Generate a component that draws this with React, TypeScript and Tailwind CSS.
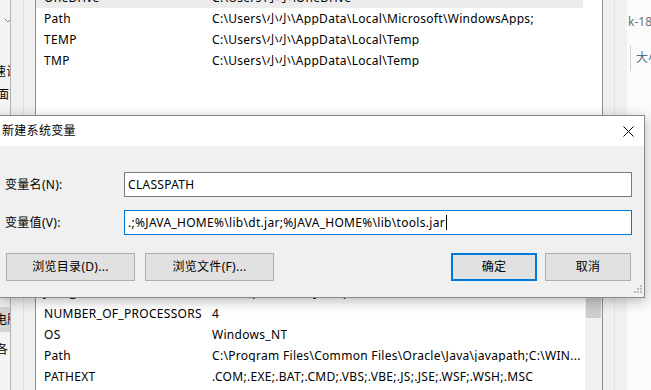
import React from "react";

const userVars = [
  { name: "OneDrive", value: "C:\\Users\\小小\\OneDrive", selected: true },
  { name: "Path", value: "C:\\Users\\小小\\AppData\\Local\\Microsoft\\WindowsApps;" },
  { name: "TEMP", value: "C:\\Users\\小小\\AppData\\Local\\Temp" },
  { name: "TMP", value: "C:\\Users\\小小\\AppData\\Local\\Temp" },
];

// rows above JAVA_HOME sit behind the dialog, so only a spacer is kept for them
const systemVars = [
  { name: "JAVA_HOME", value: "C:\\Program Files\\Java\\jdk-18.0.1" },
  { name: "NUMBER_OF_PROCESSORS", value: "4" },
  { name: "OS", value: "Windows_NT" },
  { name: "Path", value: "C:\\Program Files\\Common Files\\Oracle\\Java\\javapath;C:\\WIN..." },
  { name: "PATHEXT", value: ".COM;.EXE;.BAT;.CMD;.VBS;.VBE;.JS;.JSE;.WSF;.WSH;.MSC" },
  { name: "PROCESSOR_ARCHITECTURE", value: "AMD64" },
];

function VarRow({ name, value, selected }: { name: string; value: string; selected?: boolean }) {
  return (
    <div className={`flex h-[21px] w-[547px] items-center whitespace-nowrap ${selected ? "bg-[#ececec]" : ""}`}>
      <span className="w-[176px] pl-[8px] overflow-hidden">{name}</span>
      <span className="overflow-hidden">{value}</span>
    </div>
  );
}

function SizeGrip() {
  return (
    <svg width="10" height="10" viewBox="0 0 10 10" className="absolute right-[2px] bottom-[2px]">
      {[
        [8, 0],
        [5, 3],
        [8, 3],
        [2, 6],
        [5, 6],
        [8, 6],
      ].map(([x, y], i) => (
        <rect key={i} x={x} y={y} width="2" height="2" fill="#bcbcbc" />
      ))}
    </svg>
  );
}

export default function App() {
  return (
    <div className="relative flex h-[390px] w-[651px] overflow-hidden bg-[#f0f0f0] text-[12px] leading-none tracking-[0.3px] text-black font-['Noto_Sans','Noto_Sans_CJK_SC',sans-serif]">
      {/* Left background window fragment */}
      <div className="flex w-[11px] shrink-0 flex-col border-r border-[#b4b4b4] bg-[#f3f3f3] whitespace-nowrap overflow-hidden">
        <svg width="8" height="5" viewBox="0 0 8 5" className="mt-[18px] ml-[4px]">
          <path d="M0.5 0.5 L4 4 L7.5 0.5" stroke="#8a8a8a" fill="none" />
        </svg>
        <div className="mt-[43px] -ml-[6px]">速设</div>
        <div className="mt-[11px] -ml-[3px]">面</div>
        <div className="mt-[206px] -ml-[7px] flex h-[25px] items-center bg-[#d4d4d4] pl-[2px]">电脑</div>
        <div className="mt-[12px] -ml-[4px]">各</div>
      </div>

      {/* Environment variables window */}
      <div className="flex w-[616px] shrink-0 shadow-[2px_0_3px_rgba(0,0,0,0.25)]">
        <div className="w-[24px] shrink-0 pl-[12px]">
          <div className="h-full border-l border-[#e2e2e2]" />
        </div>
        <div className="flex w-[568px] shrink-0 flex-col">
          <div className="h-[160px] overflow-hidden border-x border-[#8d8d9a] bg-white">
            <div className="-mt-[13px]">
              {userVars.map((v) => (
                <VarRow key={v.name} {...v} />
              ))}
            </div>
          </div>
          <div className="mt-[10px] flex flex-1 overflow-hidden border-x border-[#8d8d9a] bg-white">
            <div className="flex-1 pt-[112px]">
              {systemVars.map((v) => (
                <VarRow key={v.name} {...v} />
              ))}
            </div>
            <div className="w-[17px] shrink-0 bg-[#f0f0f0] px-[1px]">
              <div className="mt-[127px] h-[21px] bg-[#cdcdcd]" />
            </div>
          </div>
        </div>
        <div className="w-[24px] shrink-0 pl-[11px]">
          <div className="h-full border-l border-[#e2e2e2]" />
        </div>
      </div>

      {/* Right background window fragment */}
      <div className="flex flex-1 flex-col overflow-hidden whitespace-nowrap bg-[#fbfbfb]">
        <div className="mt-[16px] ml-[1px] tracking-normal text-[#707070]">k-18</div>
        <div className="mt-[17px] ml-[3px] flex h-[26px] items-center border-l border-[#d0d0d0] pl-[5px] text-[#4e6d8c]">
          大小
        </div>
      </div>

      {/* New system variable dialog */}
      <div className="absolute left-[-1px] top-[115px] w-[646px] border border-[#8a8a8a] shadow-[0_3px_12px_rgba(0,0,0,0.28)]">
        <div className="flex h-[30px] items-center justify-between bg-white">
          <span className="pl-[2px]">新建系统变量</span>
          <svg width="11" height="11" viewBox="0 0 11 11" className="mr-[10px]">
            <path d="M0.5 0.5 L10.5 10.5 M10.5 0.5 L0.5 10.5" stroke="#000" strokeWidth="1" />
          </svg>
        </div>
        <div className="relative h-[151px] bg-[#f0f0f0]">
          <div className="flex items-center pt-[26px]">
            <span className="w-[124px] pl-[5px]">变量名(N):</span>
            <div className="flex h-[25px] w-[508px] items-center border border-[#7a7a7a] bg-white pl-[3px]">
              CLASSPATH
            </div>
          </div>
          <div className="mt-[13px] flex items-center">
            <span className="w-[124px] pl-[5px]">变量值(V):</span>
            <div className="flex h-[25px] w-[508px] items-center border border-[#0078d7] bg-white pl-[3px]">
              <span>.;%JAVA_HOME%\lib\dt.jar;%JAVA_HOME%\lib\tools.jar</span>
              <span className="ml-[1px] h-[15px] w-[1px] bg-black" />
            </div>
          </div>
          <div className="mt-[18px] flex pl-[6px] pr-[13px]">
            <button className="flex h-[28px] w-[129px] items-center justify-center border border-[#adadad] bg-[#e1e1e1]">
              浏览目录(D)...
            </button>
            <button className="ml-[10px] flex h-[28px] w-[129px] items-center justify-center border border-[#adadad] bg-[#e1e1e1]">
              浏览文件(F)...
            </button>
            <button className="ml-auto flex h-[28px] w-[86px] items-center justify-center border-2 border-[#0078d7] bg-[#e1e1e1]">
              确定
            </button>
            <button className="ml-[8px] flex h-[28px] w-[86px] items-center justify-center border border-[#adadad] bg-[#e1e1e1]">
              取消
            </button>
          </div>
          <SizeGrip />
        </div>
      </div>
    </div>
  );
}
